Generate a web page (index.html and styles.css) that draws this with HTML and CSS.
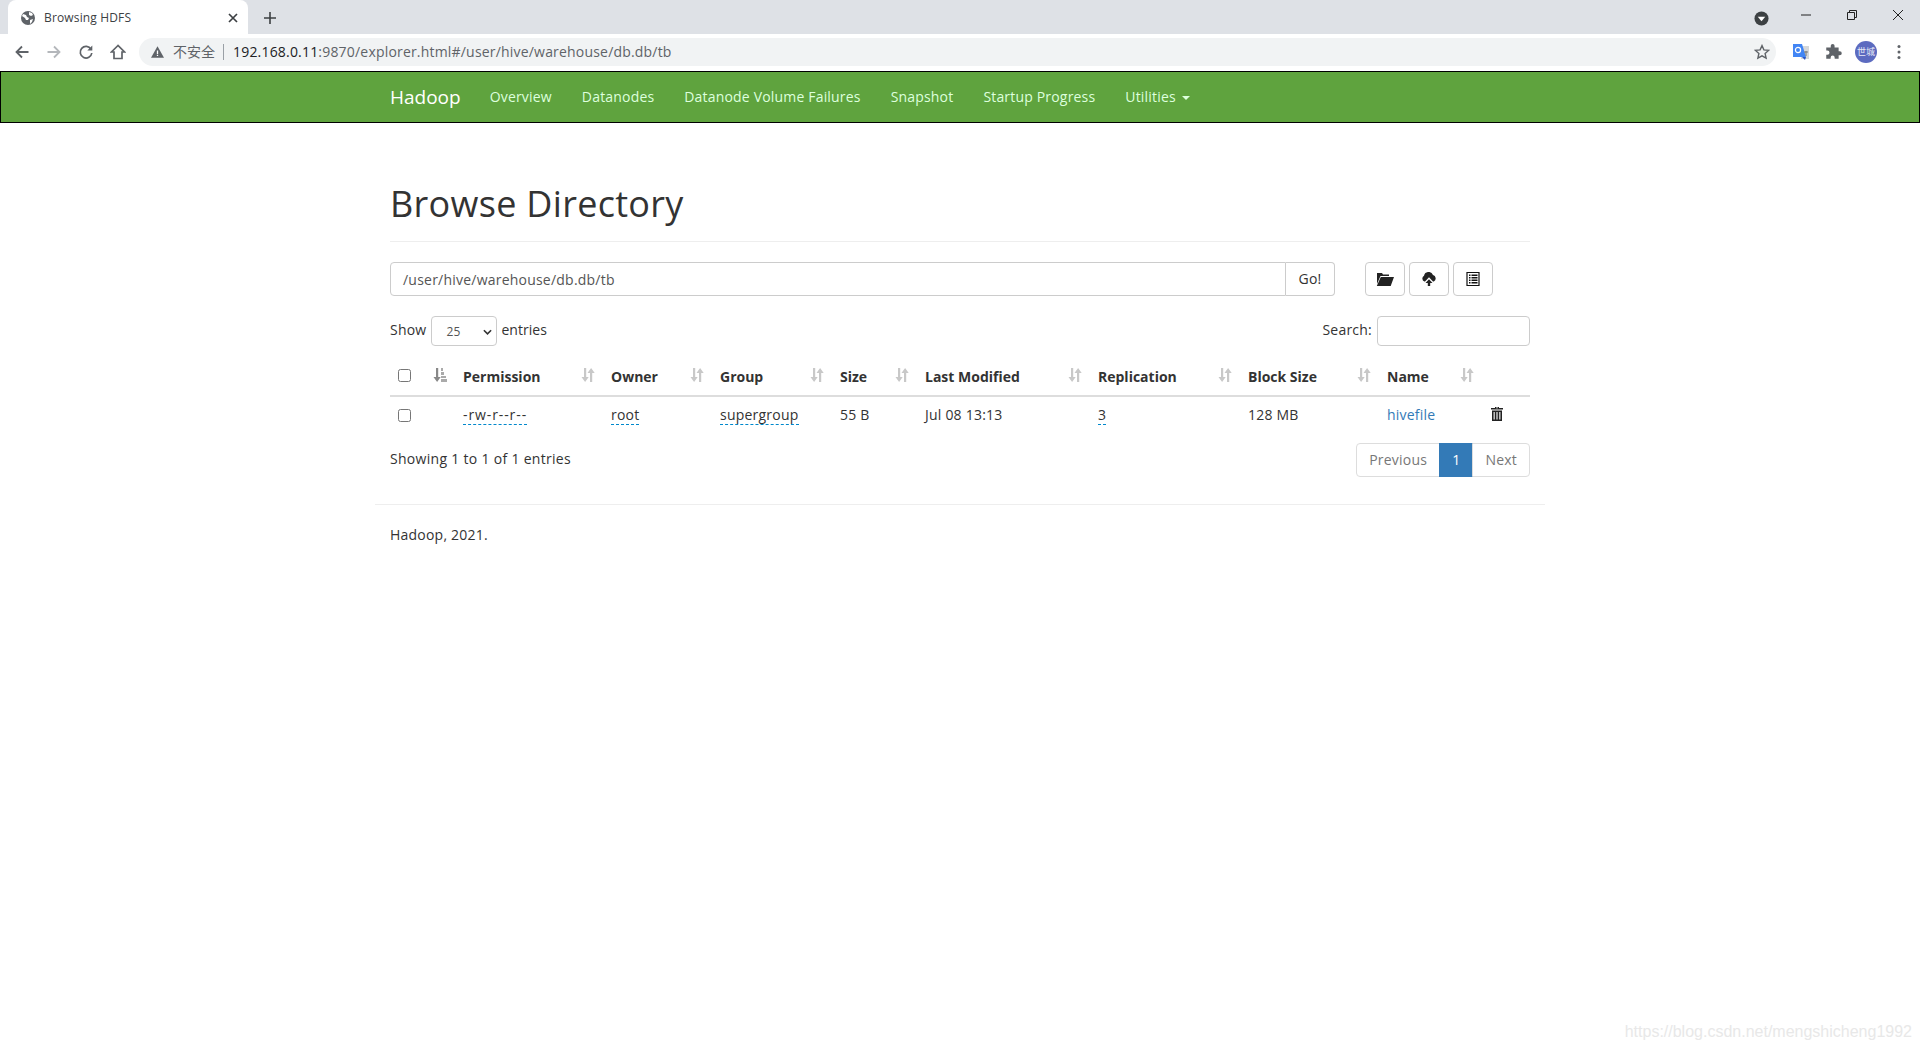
FILE: index.html
```html
<!DOCTYPE html>
<html lang="en">
<head>
<meta charset="utf-8">
<title>Browsing HDFS</title>
<link rel="stylesheet" href="styles.css">
</head>
<body>
<header class="chrome">
  <div class="tabstrip">
    <div class="tab">
      <svg class="favicon" viewBox="0 0 16 16"><circle cx="8" cy="8" r="7" fill="#5f6368"/><path d="M3 4l3 1 1 2 2 1-1 2-2 0-1-2-3-2zM9 2l3 1 1 2-2 1-2-1zM10 10l3-1-1 3-2 2z" fill="#fff"/></svg>
      <span class="tab-title">Browsing HDFS</span>
      <svg class="tab-close" viewBox="0 0 10 10"><path d="M1 1l8 8M9 1l-8 8" stroke="#3c4043" stroke-width="1.7"/></svg>
    </div>
    <svg class="newtab" viewBox="0 0 12 12"><path d="M6 0v12M0 6h12" stroke="#3c4043" stroke-width="1.6"/></svg>
    <div class="spacer"></div>
    <svg class="profile-dd" viewBox="0 0 16 16"><circle cx="8" cy="8" r="7.5" fill="#3c4043"/><path d="M4 6h8l-4 5z" fill="#fff"/></svg>
    <div class="winctl">
      <svg viewBox="0 0 12 12"><path d="M1 6h10" stroke="#222" stroke-width="1"/></svg>
      <svg viewBox="0 0 12 12"><path d="M1.5 3.5h7v7h-7zM3.5 3.500v-2h7v7h-2" fill="none" stroke="#222" stroke-width="1"/></svg>
      <svg viewBox="0 0 12 12"><path d="M1 1l10 10M11 1L1 11" stroke="#222" stroke-width="1"/></svg>
    </div>
  </div>
  <div class="toolbar">
    <svg class="tb-icon" viewBox="0 0 16 16"><path d="M14.5 8H3M8 2.500L2.500 8 8 13.500" fill="none" stroke="#5f6368" stroke-width="1.800"/></svg>
    <svg class="tb-icon" viewBox="0 0 16 16"><path d="M1.500 8H13M8 2.500L13.500 8 8 13.500" fill="none" stroke="#b4b7bb" stroke-width="1.800"/></svg>
    <svg class="tb-icon" viewBox="0 0 16 16"><path d="M13 5.200A5.800 5.800 0 1 0 13.800 9" fill="none" stroke="#5f6368" stroke-width="1.700"/><path d="M14.300 1.500v5h-5z" fill="#5f6368"/></svg>
    <svg class="tb-icon" viewBox="0 0 16 16"><path d="M8 1.500L1.500 8H4v6.500h8V8h2.500z" fill="none" stroke="#5f6368" stroke-width="1.700"/></svg>
    <div class="omnibox">
      <svg class="warn" viewBox="0 0 16 14"><path d="M8 0l8 14H0z" fill="#5f6368"/><path d="M7.200 5h1.600v4.500H7.200zM7.200 10.500h1.600V12H7.200z" fill="#fff"/></svg>
      <span class="insecure">不安全</span>
      <span class="sep"></span>
      <span class="url"><b>192.168.0.11</b>:9870/explorer.html#/user/hive/warehouse/db.db/tb</span>
      <svg class="star" viewBox="0 0 16 16"><path d="M8 1.600l1.900 4.300 4.700.5-3.500 3.100 1 4.600L8 11.800l-4.100 2.300 1-4.600L1.400 6.400l4.700-.5z" fill="none" stroke="#5f6368" stroke-width="1.400"/></svg>
    </div>
    <div class="ext">
      <svg class="ext-icon" viewBox="0 0 18 18"><path d="M9 3h8v13H9z" fill="#d5d7d9"/><path d="M1 1h9l4 13H1z" fill="#4285f4"/><path d="M10 14l3 3 1-3z" fill="#2a56c6"/><circle cx="6" cy="7" r="2.600" fill="none" stroke="#fff" stroke-width="1.200"/><path d="M12 9h4M14 8v5" stroke="#777" stroke-width="1"/></svg>
      <svg class="ext-icon" viewBox="0 0 16 16"><path d="M6 2.500a1.700 1.700 0 0 1 3.400 0V4h3.600v3.300h1a1.800 1.800 0 0 1 0 3.600h-1V14H9.500v-1a1.800 1.800 0 0 0-3.600 0v1H2v-3.500h1a1.900 1.900 0 0 0 0-3.800H2V4h4z" fill="#5f6368"/></svg>
      <span class="avatar">世城</span>
      <svg class="menu-dots" viewBox="0 0 4 16"><circle cx="2" cy="2.500" r="1.500" fill="#5f6368"/><circle cx="2" cy="8" r="1.500" fill="#5f6368"/><circle cx="2" cy="13.500" r="1.500" fill="#5f6368"/></svg>
    </div>
  </div>
</header>

<nav class="navbar">
  <div class="nav-inner">
    <a class="brand">Hadoop</a>
    <a class="nav-link">Overview</a>
    <a class="nav-link">Datanodes</a>
    <a class="nav-link">Datanode Volume Failures</a>
    <a class="nav-link">Snapshot</a>
    <a class="nav-link">Startup Progress</a>
    <a class="nav-link">Utilities <i class="caret"></i></a>
  </div>
</nav>

<main class="container">
  <div class="page-header"><h1>Browse Directory</h1></div>

  <div class="path-row">
    <div class="input-group">
      <div class="path-input">/user/hive/warehouse/db.db/tb</div>
      <div class="go-btn">Go!</div>
    </div>
    <div class="actions">
      <div class="icon-btn"><svg viewBox="0 0 18 14" class="i18"><path d="M1 3V1h5l1 1.500h6V4H4.500L1 12zM4.800 5H18l-3.300 9H0.800z" fill="#222"/></svg></div>
      <div class="icon-btn"><svg viewBox="0 0 16 14" class="i16"><path d="M3.400 9.500A3.200 3.200 0 0 1 3 3.700 4.700 4.700 0 0 1 12 3a3.500 3.500 0 0 1 .8 6.500h-.8L8 5.200 4 9.500z" fill="#222"/><path d="M8 7.200l3.500 3.800H9.200v3H6.800v-3H4.500z" fill="#222"/></svg></div>
      <div class="icon-btn"><svg viewBox="0 0 14 14" class="i14"><path d="M1 .5h12v13H1z" fill="#fff" stroke="#111" stroke-width="1.200"/><path d="M3 2.500h1.500V4H3zM3 5h1.500v1.500H3zM3 7.500h1.500V9H3zM3 10h1.500v1.500H3zM5.500 2.500H11.500V4H5.500zM5.500 5H11.500v1.500H5.500zM5.500 7.500H11.500V9H5.500zM5.500 10H11.500v1.500H5.500z" fill="#111"/></svg></div>
    </div>
  </div>

  <div class="dt-top">
    <label class="dt-length">Show <span class="fake-select">25<svg viewBox="0 0 10 6"><path d="M1 1l4 4 4-4" fill="none" stroke="#333" stroke-width="1.800"/></svg></span> <span class="entries">entries</span></label>
    <label class="dt-search">Search: <span class="search-input"></span></label>
  </div>

  <table class="files">
    <colgroup>
      <col class="c0"><col class="c1"><col class="c2"><col class="c3"><col class="c4"><col class="c5"><col class="c6"><col class="c7"><col class="c8">
    </colgroup>
    <thead>
      <tr>
        <th class="first"><input type="checkbox" class="cb"><svg class="sort active" viewBox="0 0 14 14"><path d="M3 0h2.200v9h2.500L4.100 14 .5 9H3z" fill="#888"/><path d="M8 0h2v3H8zM8 4h3v3H8zM8 8h5v2H8zM8 11h6v3H8z" fill="#aaa"/></svg></th>
        <th>Permission<svg class="sort" viewBox="0 0 14 14"><use href="#sorticon"/></svg></th>
        <th>Owner<svg class="sort" viewBox="0 0 14 14"><use href="#sorticon"/></svg></th>
        <th>Group<svg class="sort" viewBox="0 0 14 14"><use href="#sorticon"/></svg></th>
        <th>Size<svg class="sort" viewBox="0 0 14 14"><use href="#sorticon"/></svg></th>
        <th>Last Modified<svg class="sort" viewBox="0 0 14 14"><use href="#sorticon"/></svg></th>
        <th>Replication<svg class="sort" viewBox="0 0 14 14"><use href="#sorticon"/></svg></th>
        <th>Block Size<svg class="sort" viewBox="0 0 14 14"><use href="#sorticon"/></svg></th>
        <th>Name<svg class="sort" viewBox="0 0 14 14"><use href="#sorticon"/></svg></th>
        <th></th>
      </tr>
    </thead>
    <tbody>
      <tr>
        <td class="first"><input type="checkbox" class="cb"></td>
        <td><span class="editable perm">-rw-r--r--</span></td>
        <td><span class="editable">root</span></td>
        <td><span class="editable">supergroup</span></td>
        <td>55 B</td>
        <td>Jul 08 13:13</td>
        <td><span class="editable">3</span></td>
        <td>128 MB</td>
        <td><a class="link">hivefile</a></td>
        <td class="trash-cell"><svg class="trash" viewBox="0 0 12 14"><path d="M4 0h4v1h4v1.500H0V1h4zM1 3.500h10V14H1z" fill="#222"/><path d="M2.600 5h1.100v7.500H2.600zM5.450 5h1.100v7.500h-1.100zM8.300 5h1.100v7.500H8.300z" fill="#fff"/><path d="M5 .6h2v.6H5z" fill="#fff"/></svg></td>
      </tr>
    </tbody>
  </table>

  <div class="dt-bottom">
    <div class="dt-info">Showing 1 to 1 of 1 entries</div>
    <div class="pagination"><span class="pg">Previous</span><span class="pg on">1</span><span class="pg">Next</span></div>
  </div>

  <footer class="page-footer">Hadoop, 2021.</footer>
</main>

<div class="watermark">https://blog.csdn.net/mengshicheng1992</div>

<svg class="defs" width="0" height="0"><defs><g id="sorticon"><path d="M3 0h2.200v9h2.500L4.100 14 .5 9H3z" fill="#c8c8c8"/><path d="M9 14h2.200V5h2.500L10.100 0 6.500 5H9z" fill="#c8c8c8"/></g></defs></svg>
</body>
</html>
```

FILE: styles.css
```css
* { box-sizing: border-box; }
html, body { margin: 0; padding: 0; background: #fff; }
body { font-family: "Open Sans", "Noto Sans CJK SC", sans-serif; font-size: 14px; line-height: 20px; letter-spacing: .22px; color: #333; height: 1050px; overflow: hidden; position: relative; }

.chrome { height: 71px; }
.tabstrip { height: 34px; background: #dee1e6; display: flex; align-items: center; padding-left: 8px; }
.tab { width: 240px; height: 34px; background: #fff; border-radius: 8px 8px 0 0; display: flex; align-items: center; padding: 2px 10px 0 12px; }
.favicon { width: 16px; height: 16px; flex: none; }
.tab-title { font-size: 12px; color: #3c4043; margin-left: 8px; flex: 1; letter-spacing: .15px; }
.tab-close { width: 10px; height: 10px; }
.newtab { width: 12px; height: 12px; margin-left: 16px; margin-top: 2px; }
.spacer { flex: 1; }
.profile-dd { width: 15px; height: 15px; margin-right: 31px; margin-top: 2px; }
.winctl { display: flex; gap: 34px; padding-right: 16px; margin-bottom: 4px; }
.winctl svg { width: 12px; height: 12px; }

.toolbar { height: 37px; background: #fff; display: flex; align-items: center; padding-left: 14px; padding-bottom: 1px; }
.tb-icon { width: 16px; height: 16px; margin-right: 16px; flex: none; }
.tb-icon:nth-child(4) { margin-right: 13px; }
.omnibox { width: 1637px; height: 28px; border-radius: 14px; background: #f1f3f4; display: flex; align-items: center; padding: 0 6px 0 12px; font-size: 14px; flex: none; letter-spacing: .19px; }
.warn { width: 13px; height: 12px; flex: none; }
.insecure { font-size: 14px; color: #5f6368; margin-left: 9px; letter-spacing: 0; }
.sep { width: 1px; height: 16px; background: #9aa0a6; margin: 0 9px 0 8px; }
.url { flex: 1; color: #5f6368; font-size: 14px; }
.url b { font-weight: 400; color: #202124; }
.star { width: 16px; height: 16px; }
.ext { display: flex; align-items: center; margin-left: 16px; }
.ext-icon { width: 18px; height: 18px; margin-right: 14px; }
.ext-icon:nth-child(2) { margin-right: 13px; }
.avatar { width: 22px; height: 22px; border-radius: 50%; background: #5c6bc0; color: #e8eaf6; font-size: 9px; line-height: 22px; text-align: center; flex: none; letter-spacing: 0; }
.menu-dots { width: 4px; height: 16px; margin-left: 20px; }

.navbar { height: 52px; background: #5fa33e; border: 1px solid #000; }
.nav-inner { width: 1170px; margin: 0 auto; padding: 0 15px; display: flex; align-items: center; height: 50px; position: relative; left: -1px; }
.brand { color: #fff; font-size: 19px; margin-right: 14px; letter-spacing: 0; margin-left: 1px; }
.nav-link { color: #ddffdd; padding: 0 15px; letter-spacing: .18px; }
.caret { display: inline-block; border-top: 4px solid; border-left: 4px solid transparent; border-right: 4px solid transparent; width: 0; height: 0; vertical-align: middle; margin-left: 2px; }

.container { width: 1170px; margin: 0 auto; padding: 0 15px; }
.page-header { height: 119px; border-bottom: 1px solid #eee; padding-top: 61px; }
.page-header h1 { margin: 0; font-size: 36px; font-weight: 500; line-height: 40px; color: #333; letter-spacing: .3px; }

.path-row { display: flex; margin-top: 20px; height: 34px; }
.input-group { width: 945px; display: flex; height: 34px; }
.path-input { flex: 1; border: 1px solid #ccc; border-radius: 4px 0 0 4px; padding: 7px 12px 5px; color: #555; }
.go-btn { width: 49px; border: 1px solid #ccc; border-left: 0; border-radius: 0 4px 4px 0; text-align: center; padding-top: 6px; }
.actions { display: flex; gap: 4px; margin-left: 30px; }
.icon-btn { width: 40px; height: 34px; border: 1px solid #ccc; border-radius: 4px; display: flex; align-items: center; justify-content: center; }
.i18 { width: 18px; height: 14px; }
.i16 { width: 16px; height: 14px; }
.i14 { width: 14px; height: 14px; }

.dt-top { display: flex; justify-content: space-between; align-items: flex-start; margin-top: 20px; height: 30px; }
.dt-length, .dt-search { display: flex; align-items: flex-start; gap: 5px; line-height: 28px; }
.dt-length { gap: 5px; }
.fake-select { width: 66px; height: 30px; border: 1px solid #ccc; border-radius: 4px; font-size: 12px; color: #555; padding-left: 14px; line-height: 30px; position: relative; display: block; margin-right: -1px; }
.fake-select svg { position: absolute; right: 4px; top: 12px; width: 9px; height: 6px; }
.entries { letter-spacing: .05px; }
.search-input { width: 153px; height: 30px; border: 1px solid #ccc; border-radius: 4px; display: block; }

.files { width: 1140px; border-collapse: collapse; table-layout: fixed; margin-top: 13px; }
.c0 { width: 65px; } .c1 { width: 148px; } .c2 { width: 109px; } .c3 { width: 120px; } .c4 { width: 85px; } .c5 { width: 173px; } .c6 { width: 150px; } .c7 { width: 139px; } .c8 { width: 103px; }
.files th { text-align: left; font-weight: 700; padding: 8px; padding-right: 30px; border-bottom: 2px solid #ddd; position: relative; white-space: nowrap; height: 35px; letter-spacing: 0; }
.files td { padding: 8px; height: 37px; white-space: nowrap; }
.files .first { padding-left: 8px; }
th .cb { position: relative; top: -2px; }
.cb { width: 13px; height: 13px; margin: 0; vertical-align: middle; display: block; }
.sort { position: absolute; right: 8px; top: 9px; width: 14px; height: 14px; }
.editable { border-bottom: 1px dashed #08c; }
.perm { letter-spacing: .9px; }
.link { color: #337ab7; }
.trash-cell { padding: 6px 8px 8px 9px !important; }
.trash { width: 12px; height: 14px; display: block; }

.dt-bottom { display: flex; justify-content: space-between; align-items: flex-start; padding-top: 10px; height: 71px; }
.dt-info { padding-top: 6px; letter-spacing: .3px; }
.pagination { display: flex; height: 34px; }
.pg { border: 1px solid #ddd; padding: 6px 12px; color: #777; margin-left: -1px; letter-spacing: .22px; }
.pg:first-child { border-radius: 4px 0 0 4px; }
.pg:last-child { border-radius: 0 4px 4px 0; color: #777; }
.pg.on { background: #337ab7; border-color: #337ab7; color: #fff; }

.page-footer { margin: 0 -15px; border-top: 1px solid #eee; padding: 20px 15px 0; }

.watermark { position: absolute; right: 8px; top: 1022px; font-family: "Liberation Sans", sans-serif; font-size: 16px; letter-spacing: 0; color: #e8e8e8; }
.defs { position: absolute; }
```
